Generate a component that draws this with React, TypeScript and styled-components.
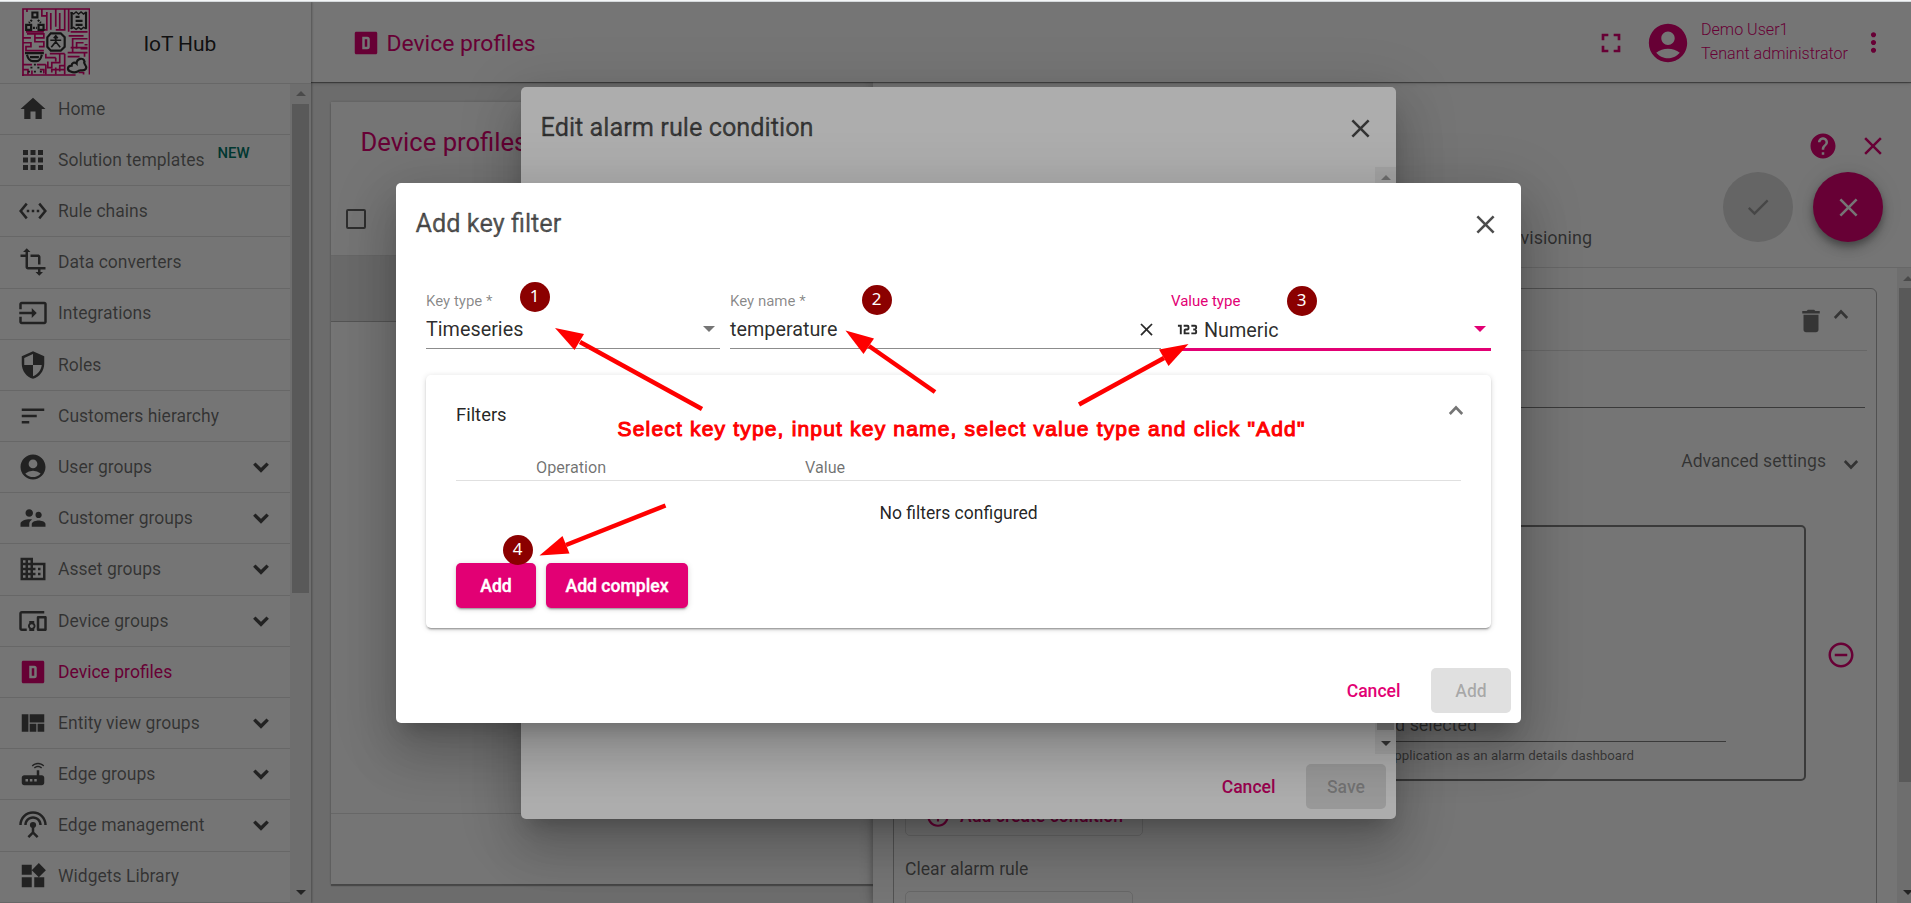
import React from 'react';
import styled, { createGlobalStyle, css } from 'styled-components';
import {
  MdHome, MdApps, MdSettingsEthernet, MdTransform, MdInput, MdSecurity, MdSort, MdAccountCircle,
  MdSupervisorAccount, MdDomain, MdDevicesOther, MdViewQuilt, MdRouter, MdSettingsInputAntenna,
  MdWidgets, MdFullscreen, MdMoreVert, MdClose, MdCheck, MdHelp, MdDelete,
  MdRemoveCircleOutline, MdAddCircleOutline,
} from 'react-icons/md';

const PINK = '#e20074';
const DIVIDER = 'rgba(0, 0, 0, 0.12)';

const GlobalStyle = createGlobalStyle`
  *, *::before, *::after { box-sizing: border-box; }
  body {
    margin: 0;
    overflow: hidden;
    background: #fff;
    font-family: Roboto, "Liberation Sans", sans-serif;
    color: rgba(0, 0, 0, 0.87);
  }
  button { font-family: inherit; border: 0; padding: 0; background: none; }
  svg { display: block; flex: none; }
`;

const Window = styled.div`
  height: 903px;
  display: flex;
  flex-direction: column;
  overflow: hidden;
`;

const BrowserEdge = styled.div`
  height: 2px;
  flex: none;
  background: #f4f6f7;
  border-bottom: 1px solid #d5d9dc;
`;

const Screen = styled.div`
  position: relative;
  flex: 1;
  min-height: 0;
  display: flex;
  overflow: hidden;
`;

/* ---------- side menu ---------- */

const Sidebar = styled.aside`
  position: relative;
  z-index: 2;
  width: 311px;
  flex: none;
  display: flex;
  flex-direction: column;
  background: #fff;
  box-shadow: 1px 0 2px rgba(0, 0, 0, 0.3);
`;

const Brand = styled.div`
  height: 81.8px;
  flex: none;
  display: flex;
  align-items: flex-start;
  padding: 5.5px 0 0 21.5px;
  border-bottom: 1px solid ${DIVIDER};
`;

const BrandName = styled.span`
  margin: 20px 0 0 53.5px;
  font-size: 21px;
  line-height: 32px;
  letter-spacing: -0.1px;
  color: rgba(0, 0, 0, 0.87);
`;

const MenuArea = styled.div`
  flex: 1;
  min-height: 0;
  display: flex;
`;

const Menu = styled.nav`
  flex: 1;
  overflow: hidden;
`;

const MenuItem = styled.div<{ $active?: boolean }>`
  height: 51.2px;
  display: flex;
  align-items: center;
  padding: 0 20px 0.5px 18px;
  gap: 10px;
  border-bottom: 1px solid ${DIVIDER};
  font-size: 17.55px;
  color: ${p => (p.$active ? PINK : 'rgba(0, 0, 0, 0.56)')};
  & > svg { color: ${p => (p.$active ? PINK : '#4c4c4c')}; }
`;

const MenuLabel = styled.span`
  flex: 1;
  display: flex;
  white-space: nowrap;
`;

const NewMark = styled.sup`
  margin: -6px 0 0 13px;
  font-size: 14.9px;
  line-height: 18px;
  font-weight: 500;
  color: #00796b;
`;

const Track = styled.div<{ $width: number }>`
  width: ${p => p.$width}px;
  flex: none;
  display: flex;
  flex-direction: column;
  padding: 0 2px;
  background: #f1f1f1;
`;

const Thumb = styled.div<{ $height: number }>`
  height: ${p => p.$height}px;
  flex: none;
  background: #c1c1c1;
`;

const TrackArrow = styled.div<{ $down?: boolean }>`
  height: 20px;
  flex: none;
  margin-top: ${p => (p.$down ? 'auto' : '0')};
  padding-bottom: ${p => (p.$down ? '1px' : '0')};
  display: flex;
  align-items: center;
  justify-content: center;
  &::before {
    content: '';
    border: 5px solid transparent;
    ${p => p.$down
      ? css`border-top: 5px solid #505050; border-bottom: 0;`
      : css`border-bottom: 5px solid #a3a3a3; border-top: 0;`}
  }
`;

const PanelThumb = styled(Thumb)`
  margin-right: -2px;
`;

const PanelArrow = styled(TrackArrow)`
  width: 18px;
`;

/* ---------- main column ---------- */

const Main = styled.div`
  position: relative;
  flex: 1;
  min-width: 0;
  display: flex;
  flex-direction: column;
  background: #ececec;
`;

const Toolbar = styled.header`
  position: relative;
  z-index: 1;
  height: 80px;
  flex: none;
  display: flex;
  align-items: center;
  padding: 1px 22px 0 39.5px;
  background: #fff;
  color: ${PINK};
  box-shadow: 0 1px 1px rgba(0, 0, 0, 0.4), 0 2px 4px rgba(0, 0, 0, 0.12);
`;

const ToolbarTitle = styled.h1`
  flex: 1;
  margin: 1px 0 0 6px;
  font-size: 22.9px;
  font-weight: 400;
`;

const UserInfo = styled.div`
  width: 147px;
  margin: 0 10px;
  font-size: 16.1px;
  line-height: 24px;
  font-weight: 300;
  white-space: nowrap;
  padding-bottom: 2px;
`;

const FullscreenButton = styled.button`
  margin-right: 18px;
  color: ${PINK};
`;

const Content = styled.div`
  flex: 1;
  min-height: 0;
  display: flex;
  padding: 20px 20px 19px 20px;
`;

const TableCard = styled.section`
  flex: 1;
  display: flex;
  flex-direction: column;
  background: #fff;
  box-shadow: 0 2px 1px rgba(0, 0, 0, 0.3), 0 0 3px rgba(0, 0, 0, 0.18);
`;

const TableTitle = styled.h2`
  height: 82px;
  margin: 0;
  padding: 24px 0 0 29.5px;
  font-size: 25.6px;
  line-height: 32px;
  font-weight: 400;
  color: ${PINK};
`;

const TableHead = styled.div`
  height: 72px;
  padding: 25px 0 0 15px;
  border-bottom: 1px solid ${DIVIDER};
`;

const Checkbox = styled.div`
  width: 20px;
  height: 20px;
  border: 2px solid rgba(0, 0, 0, 0.6);
  border-radius: 2px;
`;

const TableRow = styled.div`
  height: 66px;
  background: #e6e6e6;
  border-bottom: 1px solid rgba(0, 0, 0, 0.2);
`;

const TableFoot = styled.div`
  height: 71px;
  margin-top: auto;
  border-top: 1px solid ${DIVIDER};
`;

/* ---------- details drawer ---------- */

const Drawer = styled.aside`
  position: absolute;
  top: 80px;
  right: 0;
  bottom: 0;
  width: 1038px;
  display: flex;
  flex-direction: column;
  background: #fff;
  box-shadow: 0 5px 6px rgba(0, 0, 0, 0.2), 0 0 12px rgba(0, 0, 0, 0.25);
`;

const DrawerHead = styled.div`
  height: 186px;
  flex: none;
  display: flex;
  flex-direction: column;
  align-items: flex-end;
  border-bottom: 1px solid ${DIVIDER};
`;

const DrawerTools = styled.div`
  display: flex;
  align-items: center;
  gap: 20px;
  padding: 49px 23px 0 0;
  color: ${PINK};
`;

const DrawerActions = styled.div`
  width: 100%;
  display: flex;
  justify-content: flex-end;
  gap: 20px;
  padding: 11px 28px 0 0;
`;

const Tab = styled.span`
  margin: 55px 111px 0 0;
  font-size: 18px;
  line-height: 22px;
  color: rgba(0, 0, 0, 0.6);
`;

const RoundButton = styled.button<{ $primary?: boolean }>`
  width: 70px;
  height: 70px;
  border-radius: 50%;
  display: flex;
  align-items: center;
  justify-content: center;
  background: ${p => (p.$primary ? PINK : '#dcdcdc')};
  color: ${p => (p.$primary ? '#fff' : 'rgba(0, 0, 0, 0.3)')};
  box-shadow: ${p => (p.$primary ? '0 4px 6px rgba(0,0,0,.25), 0 8px 13px rgba(0,0,0,.14), 0 1px 22px rgba(0,0,0,.12)' : 'none')};
`;

const DrawerBody = styled.div`
  flex: 1;
  min-height: 0;
  display: flex;
`;

const DrawerScroll = styled.div`
  flex: 1;
  overflow: hidden;
  padding: 20px 20px 0 20px;
`;

const RulesBox = styled.div`
  height: 700px;
  padding: 0 11px;
  border: 1px solid rgba(0, 0, 0, 0.3);
  border-radius: 6px;
`;

const RuleHead = styled.div`
  height: 62px;
  display: flex;
  justify-content: flex-end;
  padding: 17px 16px 0 0;
  gap: 5px;
  color: rgba(0, 0, 0, 0.54);
  margin-right: -2px;
  border-bottom: 1px solid ${DIVIDER};
  svg:last-child { margin-top: 2px; }
`;

const TypeField = styled.div`
  height: 57px;
  border-bottom: 1px solid rgba(0, 0, 0, 0.5);
`;

const Advanced = styled.div`
  height: 117px;
  display: flex;
  justify-content: flex-end;
  gap: 15px;
  padding: 41px 4px 0 0;
  font-size: 17.6px;
  line-height: 24px;
  color: rgba(0, 0, 0, 0.56);
  svg { margin-top: 10px; }
`;

const ConditionRow = styled.div`
  display: flex;
  align-items: center;
  gap: 20px;
  color: ${PINK};
  & > svg { margin-top: 4px; }
`;

const ConditionBox = styled.div`
  width: 901px;
  height: 256px;
  display: flex;
  flex-direction: column;
  justify-content: flex-end;
  padding: 0 78px 14px 20px;
  border: 2px solid rgba(0, 0, 0, 0.5);
  border-radius: 5px;
  color: rgba(0, 0, 0, 0.56);
`;

const DashboardField = styled.div`
  padding: 0 249px 4px 0;
  border-bottom: 1px solid rgba(0, 0, 0, 0.5);
  text-align: right;
  font-size: 17.9px;
  line-height: 24px;
`;

const FieldHint = styled.div`
  padding: 5px 92px 0 0;
  text-align: right;
  font-size: 13.3px;
  line-height: 18px;
`;

const OutlineButton = styled.button<{ $width: number }>`
  width: ${p => p.$width}px;
  height: 46px;
  display: flex;
  align-items: center;
  gap: 9px;
  padding-left: 19px;
  border: 1px solid ${DIVIDER};
  border-radius: 5px;
  font-size: 17.6px;
  font-weight: 500;
  color: ${PINK};
`;

const CreateButton = styled(OutlineButton)`
  margin-top: 9px;
  padding-top: 5px;
`;

const ClearTitle = styled.div`
  padding: 21px 0 10px;
  font-size: 17.6px;
  line-height: 24px;
  color: rgba(0, 0, 0, 0.6);
`;

/* ---------- dialogs ---------- */

const Backdrop = styled.div<{ $top: number; $left: number }>`
  position: absolute;
  inset: 0;
  z-index: 5;
  display: flex;
  align-items: flex-start;
  padding: ${p => p.$top}px 0 0 ${p => p.$left}px;
  background: rgba(0, 0, 0, 0.32);
`;

const Dialog = styled.div<{ $width: number; $height: number }>`
  width: ${p => p.$width}px;
  height: ${p => p.$height}px;
  flex: none;
  display: flex;
  flex-direction: column;
  background: #fff;
  border-radius: 5px;
  box-shadow: 0 14px 19px -9px rgba(0, 0, 0, 0.2), 0 31px 49px 4px rgba(0, 0, 0, 0.14),
    0 12px 59px 10px rgba(0, 0, 0, 0.12);
`;

const DialogHead = styled.div`
  height: 80px;
  flex: none;
  display: flex;
  align-items: center;
  justify-content: space-between;
  padding: 2px 20px 0 19.5px;
  color: rgba(0, 0, 0, 0.7);
`;

const DialogTitle = styled.h2`
  margin: 0;
  font-size: 25.3px;
  line-height: 32px;
  font-weight: 400;
  color: rgba(0, 0, 0, 0.68);
  -webkit-text-stroke: 0.3px currentColor;
`;

const ConditionBody = styled.div`
  flex: 1;
  display: flex;
  justify-content: flex-end;
`;

const DialogActions = styled.div`
  flex: none;
  display: flex;
  align-items: center;
  justify-content: flex-end;
  gap: 30.5px;
  padding: 10px;
`;

const ActionButton = styled.button<{ $kind: 'text' | 'filled' | 'disabled'; $width?: number }>`
  height: 45px;
  width: ${p => (p.$width ? p.$width + 'px' : 'auto')};
  border-radius: 5px;
  font-size: 17.6px;
  font-weight: 500;
  ${p => p.$kind === 'text' && css`color: ${PINK};`}
  ${p => p.$kind === 'disabled' && css`background: #e0e0e0; color: rgba(0, 0, 0, 0.26);`}
  ${p => p.$kind === 'filled' && css`
    background: ${PINK};
    color: #fff;
    -webkit-text-stroke: 0.4px currentColor;
    box-shadow: 0 3px 1px -2px rgba(0,0,0,.2), 0 2px 2px rgba(0,0,0,.14), 0 1px 6px rgba(0,0,0,.14);
  `}
`;

const FilterBody = styled.div`
  flex: 1;
  padding: 23px 30px 0;
`;

const FieldRow = styled.div`
  display: flex;
  height: 89px;
`;

const Field = styled.div<{ $width: number; $gap: number; $focused?: boolean }>`
  width: ${p => p.$width}px;
  height: ${p => (p.$focused ? 65 : 63)}px;
  margin-right: ${p => p.$gap}px;
  display: flex;
  flex-direction: column;
  border-bottom: ${p => (p.$focused ? `3px solid ${PINK}` : '1px solid rgba(0, 0, 0, 0.45)')};
`;

const FieldLabel = styled.label<{ $focused?: boolean }>`
  margin: 4.5px 0 1px;
  font-size: 15px;
  line-height: 20px;
  color: ${p => (p.$focused ? PINK : 'rgba(0, 0, 0, 0.47)')};
`;

const FieldValue = styled.div<{ $inset: number }>`
  flex: 1;
  display: flex;
  align-items: center;
  justify-content: space-between;
  padding: 0 ${p => p.$inset}px 1px 0;
  font-size: 19.8px;
  color: rgba(0, 0, 0, 0.84);
`;

const NumericValue = styled.span`
  display: flex;
  align-items: center;
  gap: 5px;
  padding: 2px 0 0 5px;
  svg { margin-top: -2px; }
`;

const Caret = styled.i<{ $focused?: boolean }>`
  border: 6.5px solid transparent;
  border-bottom: 0;
  border-top-color: ${p => (p.$focused ? PINK : 'rgba(0, 0, 0, 0.54)')};
`;

const FilterCard = styled.section`
  height: 253px;
  display: flex;
  flex-direction: column;
  padding: 0 30px;
  border-radius: 5px;
  box-shadow: 0 3px 1px -2px rgba(0,0,0,.2), 0 2px 2px rgba(0,0,0,.16), 0 1px 6px rgba(0,0,0,.14);
`;

const FilterHead = styled.div`
  height: 78px;
  display: flex;
  align-items: center;
  justify-content: space-between;
  font-size: 18.4px;
  svg { color: rgba(0, 0, 0, 0.54); margin: -8px -5px 0 0; }
`;

const FilterColumns = styled.div`
  display: grid;
  grid-template-columns: 269px 1fr;
  padding-left: 80px;
  height: 28px;
  border-bottom: 1px solid ${DIVIDER};
  font-size: 16.2px;
  line-height: 29px;
  color: rgba(0, 0, 0, 0.56);
`;

const EmptyNote = styled.div`
  height: 82px;
  line-height: 64px;
  font-size: 17.55px;
  text-align: center;
`;

const ButtonRow = styled.div`
  display: flex;
  gap: 10px;
`;

/* ---------- annotations ---------- */

const Annotations = styled.div`
  position: absolute;
  inset: -2px 0 0 0;
  z-index: 10;
  pointer-events: none;
`;

const Arrows = styled.svg`
  position: absolute;
  inset: 0;
`;

const Step = styled.span<{ $x: number; $y: number }>`
  position: absolute;
  left: ${p => p.$x}px;
  top: ${p => p.$y}px;
  width: 30px;
  height: 30px;
  border-radius: 50%;
  background: #8b0000;
  color: #fff;
  font: 17px/28px "Noto Sans", "Open Sans", sans-serif;
  text-align: center;
`;

const Instruction = styled.p`
  position: absolute;
  left: 617.5px;
  top: 416px;
  margin: 0;
  font: 400 21px/26px "Liberation Sans", Arial, sans-serif;
  letter-spacing: 1.18px;
  -webkit-text-stroke: 1px #fe0000;
  white-space: nowrap;
  color: #fe0000;
`;

/* ---------- drawings ---------- */

const BoxD = ({ size }: { size: number }) => (
  <svg width={size} height={size} viewBox="0 0 24 24" fill="currentColor">
    <path fillRule="evenodd" d="M4.2 3h15.6C20.5 3 21 3.500 21 4.200v15.600c0 .7-.5 1.200-1.200 1.200H4.200C3.500 21 3 20.500 3 19.800V4.200C3 3.500 3.500 3 4.200 3zM9 7v10h4a2 2 0 0 0 2-2V9a2 2 0 0 0-2-2H9zm2 2h2v6h-2V9z" />
  </svg>
);

const Digits = () => (
  <svg width="23" height="23" viewBox="0 0 24 24" fill="currentColor">
    <path d="M4 17V9H2V7h4v10H4M22 15c0 1.110-.9 2-2 2h-4v-2h4v-2h-2v-2h2V9h-4V7h4a2 2 0 0 1 2 2v1.500a1.500 1.500 0 0 1-1.500 1.500 1.500 1.500 0 0 1 1.500 1.500V15M14 15v2H8v-4c0-1.110.9-2 2-2h2V9H8V7h4a2 2 0 0 1 2 2v2c0 1.110-.9 2-2 2h-2v2h4z" />
  </svg>
);

const Chevron = ({ up }: { up?: boolean }) => (
  <svg width="20" height="12" viewBox="0 0 20 12" fill="none" stroke="currentColor" strokeWidth="2.6">
    <path d={up ? 'M3.800 10L10 3.500L16.200 10' : 'M3.800 2L10 8.500L16.200 2'} />
  </svg>
);

const GroupChevron = () => (
  <svg width="18" height="12" viewBox="0 0 18 12" fill="none" stroke="currentColor" strokeWidth="3.4">
    <path d="M2.300 2.600L9 9.300L15.700 2.600" />
  </svg>
);

const Logo = () => (
  <svg width="68.5" height="68.5" viewBox="0 0 69 69" fill="none">
    <g stroke={PINK} strokeWidth="1.7">
      <path d="M1 69V1H68V67M0 67.500H54M5 1V4M20 1V8H25M25 4V22H20M29 5V22M34 1V19M38 5V23M43 1V22H34M47 1V24M4 24H22M66 24H49" />
      <path d="M1 30H9M5 26H22V30H13V34H22V39H17M1 35H9V39H4V43H22M9 39V35M13 30V26" />
      <path d="M51 44V31H66M55 41V35H62M59 41H66M46 45H66M46 49H58M63 49V45M47 28H62M49 40H66M66 37H63" />
      <path d="M24 46V50H34M28 46H43M38 46V55H30V60H26V54M34 50V54M43 46V58H38V64M34 67V60M43 53V67M24 67V57M43 62H30V65" />
      <path d="M1 57H10M1 62H6V67M15 57H24M10 67V63M18 62H22V66M57 65H62V67" />
    </g>
    <g stroke="#303030" strokeWidth="2.2">
      <path d="M10.500 4.500H15.500V9.500H10.500zM4.200 17H9.200V22H4.200zM16.700 17H21.700V22H16.700z" />
      <path d="M10 12L7 15M16 12L19 15M11 20H15" strokeDasharray="2 1" />
      <path d="M50 4V21M64.500 4V21M54 9H58M54 13H61M54 17H61" />
      <path d="M49 4.500L52 6L54.500 4L57 6L59.500 4L62 6L65 4M49 21L52 19.500L54.500 21.500L57 19.500L59.500 21.500L62 19.500L65 21" strokeWidth="1.5" />
      <path d="M29 25.500H39L43 29.500V39L39 43H29L25.500 39V29.500z" />
      <path d="M34 29V35M28.500 32.500H39.500M34 34L29.500 39.500M34 34L38.500 39.500M32 30.500L34 28L36 30.500" strokeWidth="1.700" />
      <path d="M3 45.500H22M5 47C6 51 8 53.500 11 53.500H15C18 53.500 19 51 20 47M8 49.500H17" />
      <path d="M12 57H14M8.500 60H10.500M15.500 60H17.500M6 64H8M12 64H14M18 64H20" strokeWidth="1.800" />
      <path d="M49 64C45 63 45.500 58 50 58C50 55 53 54 55 56C55 51 62 49 63 54C61 56 66 58 64.500 61C62 65 58 61 56 64C54 65 51 65 49 64z" />
    </g>
  </svg>
);

const MENU: { label: string; icon: React.ReactNode; group?: boolean; fresh?: boolean; active?: boolean }[] = [
  { label: 'Home', icon: <MdHome size={30} /> },
  { label: 'Solution templates', icon: <MdApps size={30} />, fresh: true },
  { label: 'Rule chains', icon: <MdSettingsEthernet size={30} /> },
  { label: 'Data converters', icon: <MdTransform size={30} /> },
  { label: 'Integrations', icon: <MdInput size={30} /> },
  { label: 'Roles', icon: <MdSecurity size={30} /> },
  { label: 'Customers hierarchy', icon: <MdSort size={30} /> },
  { label: 'User groups', icon: <MdAccountCircle size={30} />, group: true },
  { label: 'Customer groups', icon: <MdSupervisorAccount size={30} />, group: true },
  { label: 'Asset groups', icon: <MdDomain size={30} />, group: true },
  { label: 'Device groups', icon: <MdDevicesOther size={30} />, group: true },
  { label: 'Device profiles', icon: <BoxD size={30} />, active: true },
  { label: 'Entity view groups', icon: <MdViewQuilt size={30} />, group: true },
  { label: 'Edge groups', icon: <MdRouter size={30} />, group: true },
  { label: 'Edge management', icon: <MdSettingsInputAntenna size={30} />, group: true },
  { label: 'Widgets Library', icon: <MdWidgets size={30} /> },
];

const ARROWS = [
  { from: [702, 409], to: [580, 342], head: '555,328 584,334 574.5,350' },
  { from: [935, 392], to: [869, 346], head: '845.500,330.500 874,338.500 863.500,354' },
  { from: [1079, 404.5], to: [1164, 358], head: '1188.500,344 1159,349.500 1168.500,366' },
  { from: [665.5, 505.5], to: [566, 545], head: '539.500,555.500 562.500,536 569.500,553.500' },
];

export default function App() {
  return (
    <Window>
      <GlobalStyle />
      <BrowserEdge />
      <Screen>
        <Sidebar>
          <Brand>
            <Logo />
            <BrandName>IoT Hub</BrandName>
          </Brand>
          <MenuArea>
            <Menu>
              {MENU.map(item => (
                <MenuItem key={item.label} $active={item.active}>
                  {item.icon}
                  <MenuLabel>
                    {item.label}
                    {item.fresh && <NewMark>NEW</NewMark>}
                  </MenuLabel>
                  {item.group && <GroupChevron />}
                </MenuItem>
              ))}
            </Menu>
            <Track $width={21}>
              <TrackArrow />
              <Thumb $height={489} />
              <TrackArrow $down />
            </Track>
          </MenuArea>
        </Sidebar>

        <Main>
          <Toolbar>
            <BoxD size={30} />
            <ToolbarTitle>Device profiles</ToolbarTitle>
            <FullscreenButton><MdFullscreen size={32} /></FullscreenButton>
            <MdAccountCircle size={46} />
            <UserInfo>
              <div>Demo User1</div>
              <div>Tenant administrator</div>
            </UserInfo>
            <MdMoreVert size={31} />
          </Toolbar>
          <Content>
            <TableCard>
              <TableTitle>Device profiles</TableTitle>
              <TableHead><Checkbox /></TableHead>
              <TableRow />
              <TableFoot />
            </TableCard>
          </Content>

          <Drawer>
            <DrawerHead>
              <DrawerTools>
                <MdHelp size={30} />
                <MdClose size={30} />
              </DrawerTools>
              <DrawerActions>
                <Tab>Device provisioning</Tab>
                <RoundButton><MdCheck size={28} /></RoundButton>
                <RoundButton $primary><MdClose size={31} /></RoundButton>
              </DrawerActions>
            </DrawerHead>
            <DrawerBody>
              <DrawerScroll>
                <RulesBox>
                  <RuleHead>
                    <MdDelete size={30} />
                    <Chevron up />
                  </RuleHead>
                  <TypeField />
                  <Advanced>
                    Advanced settings
                    <Chevron />
                  </Advanced>
                  <ConditionRow>
                    <ConditionBox>
                      <DashboardField>No dashboard selected</DashboardField>
                      <FieldHint>Used by mobile application as an alarm details dashboard</FieldHint>
                    </ConditionBox>
                    <MdRemoveCircleOutline size={30} />
                  </ConditionRow>
                  <CreateButton $width={238}>
                    <MdAddCircleOutline size={26} />
                    Add create condition
                  </CreateButton>
                  <ClearTitle>Clear alarm rule</ClearTitle>
                  <OutlineButton $width={228} />
                </RulesBox>
              </DrawerScroll>
              <Track $width={14}>
                <PanelArrow />
                <PanelThumb $height={494} />
                <PanelArrow $down />
              </Track>
            </DrawerBody>
          </Drawer>
        </Main>

        <Backdrop $top={85} $left={521}>
          <Dialog $width={875} $height={732}>
            <DialogHead>
              <DialogTitle>Edit alarm rule condition</DialogTitle>
              <MdClose size={31} />
            </DialogHead>
            <ConditionBody>
              <Track $width={21}>
                <TrackArrow />
                <Thumb $height={543} />
                <TrackArrow $down />
              </Track>
            </ConditionBody>
            <DialogActions>
              <ActionButton $kind="text">Cancel</ActionButton>
              <ActionButton $kind="disabled" $width={80}>Save</ActionButton>
            </DialogActions>
          </Dialog>
        </Backdrop>

        <Backdrop $top={181} $left={396}>
          <Dialog $width={1125} $height={540}>
            <DialogHead>
              <DialogTitle>Add key filter</DialogTitle>
              <MdClose size={31} />
            </DialogHead>
            <FilterBody>
              <FieldRow>
                <Field $width={294} $gap={10}>
                  <FieldLabel>Key type *</FieldLabel>
                  <FieldValue $inset={5}>Timeseries<Caret /></FieldValue>
                </Field>
                <Field $width={431} $gap={10}>
                  <FieldLabel>Key name *</FieldLabel>
                  <FieldValue $inset={4}>temperature<MdClose size={21} /></FieldValue>
                </Field>
                <Field $width={320} $gap={0} $focused>
                  <FieldLabel $focused>Value type</FieldLabel>
                  <FieldValue $inset={5}>
                    <NumericValue><Digits />Numeric</NumericValue>
                    <Caret $focused />
                  </FieldValue>
                </Field>
              </FieldRow>
              <FilterCard>
                <FilterHead>Filters<Chevron up /></FilterHead>
                <FilterColumns>
                  <span>Operation</span>
                  <span>Value</span>
                </FilterColumns>
                <EmptyNote>No filters configured</EmptyNote>
                <ButtonRow>
                  <ActionButton $kind="filled" $width={80}>Add</ActionButton>
                  <ActionButton $kind="filled" $width={142}>Add complex</ActionButton>
                </ButtonRow>
              </FilterCard>
            </FilterBody>
            <DialogActions>
              <ActionButton $kind="text">Cancel</ActionButton>
              <ActionButton $kind="disabled" $width={80}>Add</ActionButton>
            </DialogActions>
          </Dialog>
        </Backdrop>

        <Annotations>
          <Arrows width="1911" height="903" viewBox="0 0 1911 903">
            {ARROWS.map(a => (
              <g key={a.head} fill="#fe0000" stroke="none">
                <line x1={a.from[0]} y1={a.from[1]} x2={a.to[0]} y2={a.to[1]} stroke="#fe0000" strokeWidth="4.5" />
                <polygon points={a.head} />
              </g>
            ))}
          </Arrows>
          <Step $x={519.5} $y={281.5}>1</Step>
          <Step $x={861.5} $y={284.5}>2</Step>
          <Step $x={1286.5} $y={285.5}>3</Step>
          <Step $x={502.5} $y={534.5}>4</Step>
          <Instruction>Select key type, input key name, select value type and click "Add"</Instruction>
        </Annotations>
      </Screen>
    </Window>
  );
}
